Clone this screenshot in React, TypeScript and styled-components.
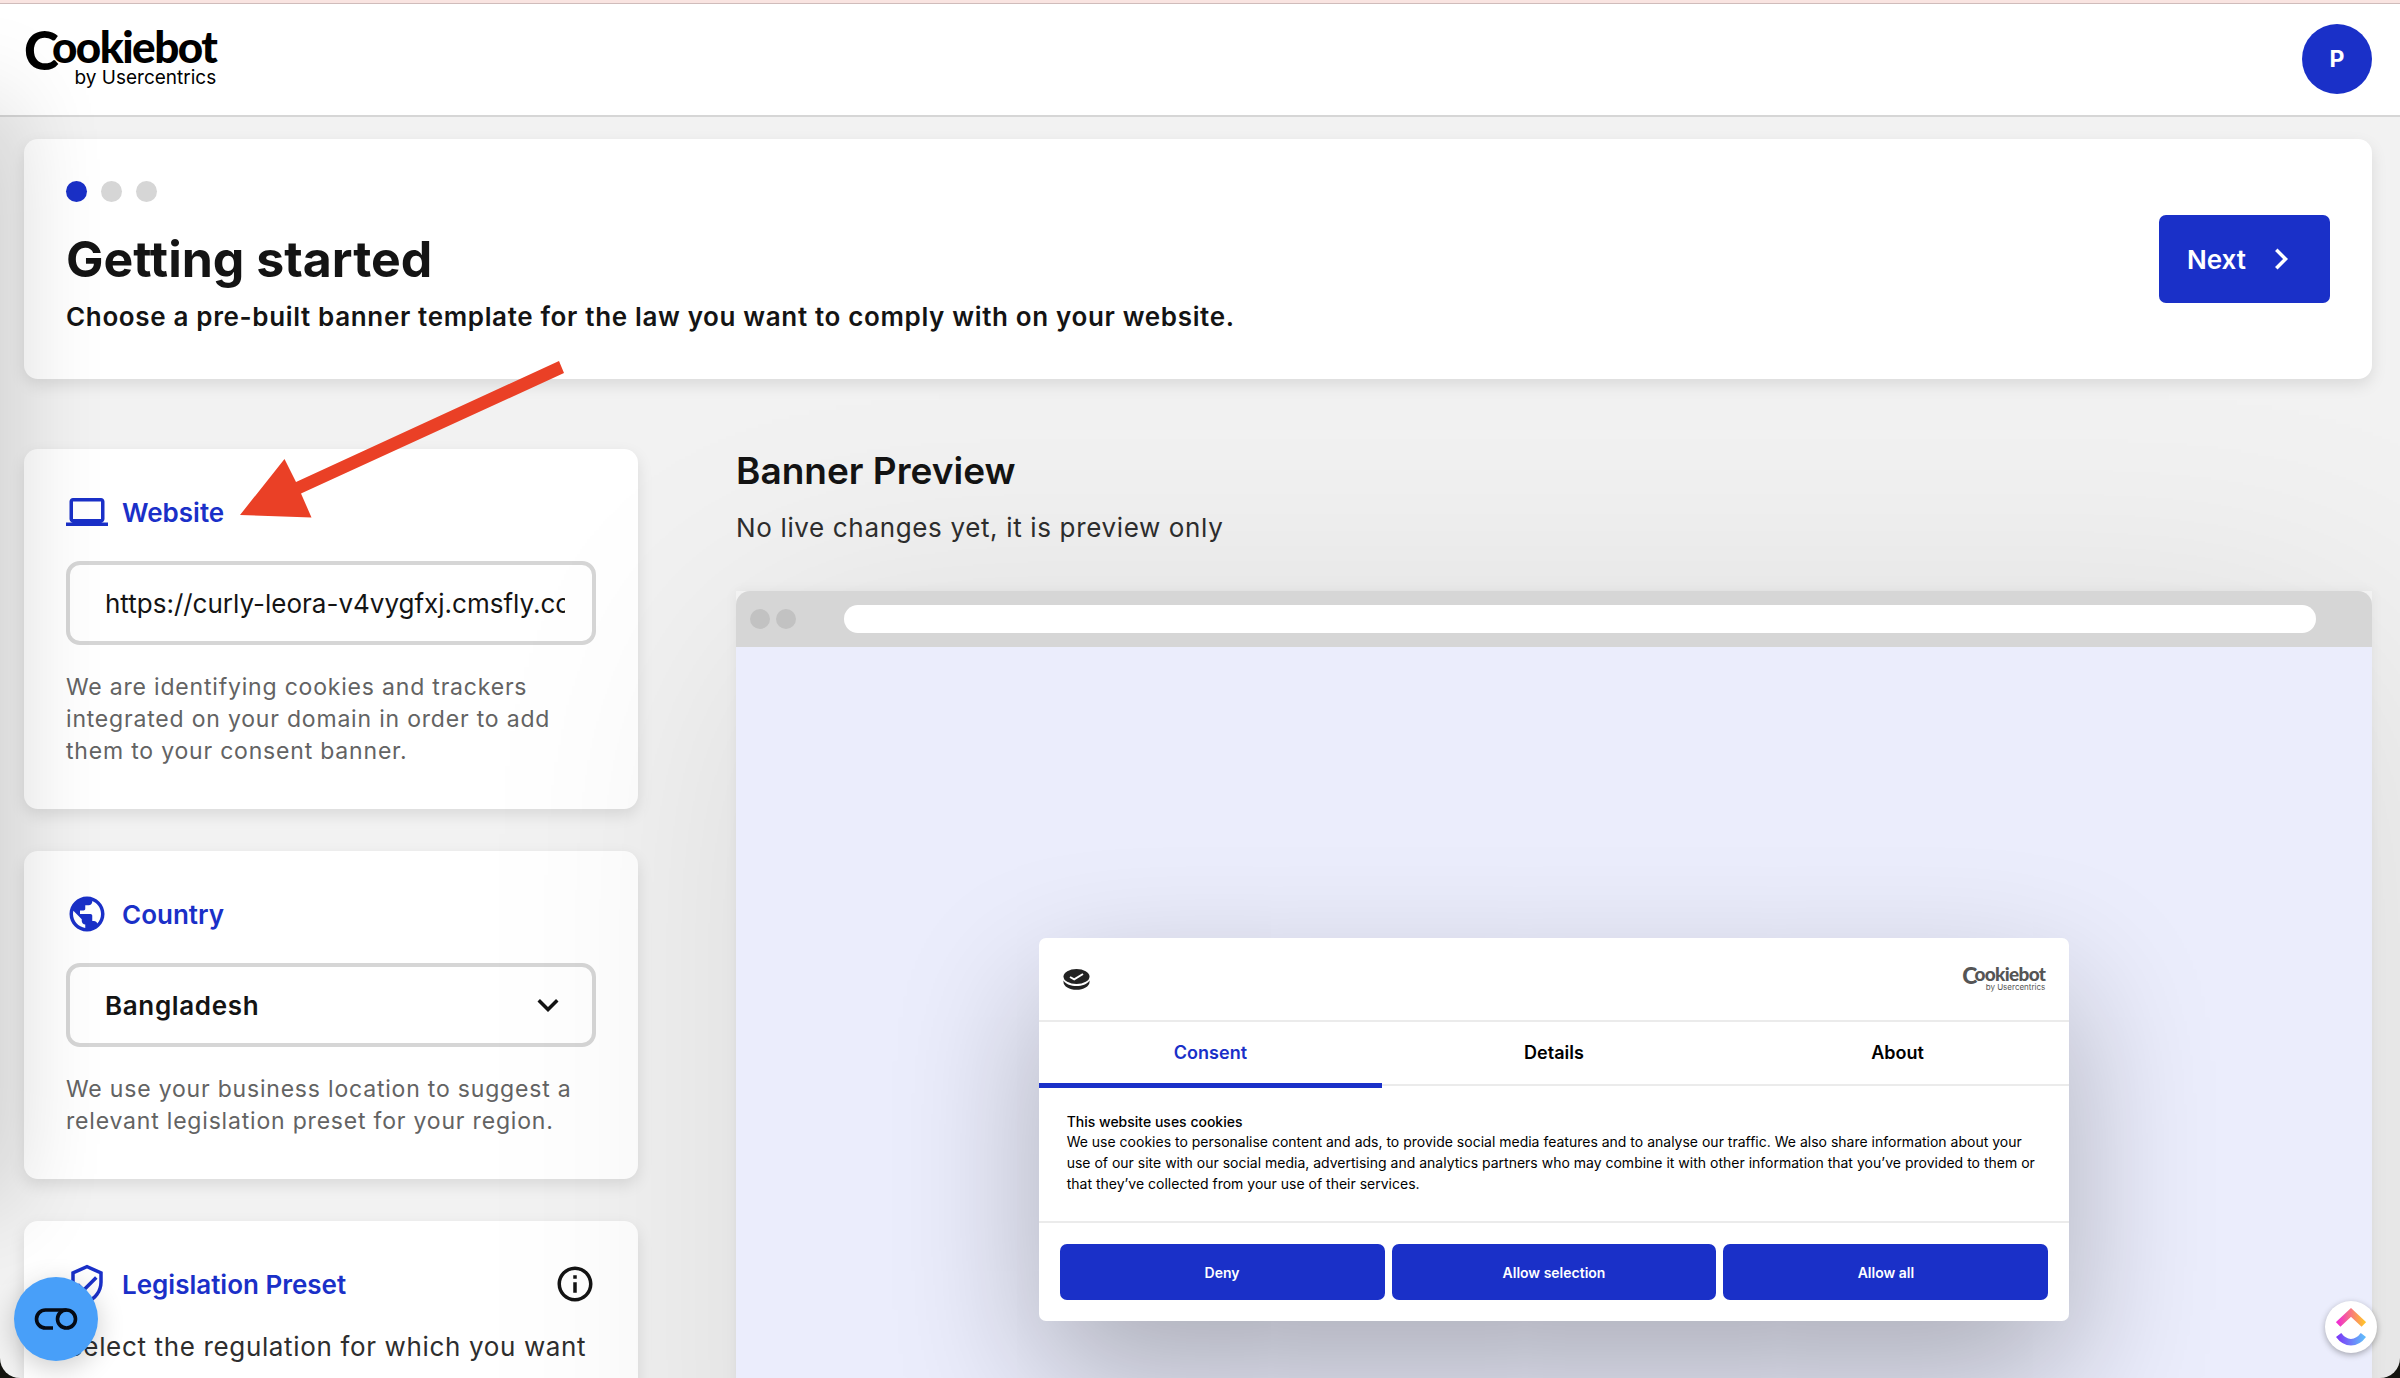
import React, { useState } from "react";
import styled, { createGlobalStyle, css } from "styled-components";
import {
  MdLaptop,
  MdPublic,
  MdOutlineVerifiedUser,
  MdInfoOutline,
  MdChevronRight,
  MdExpandMore,
} from "react-icons/md";

const blue = "#1a30c8";
const ink = "#141414";
const line = "#d6d6d6";
const tracking = "0.025em";

const GlobalStyle = createGlobalStyle`
  *, *::before, *::after { box-sizing: border-box; }
  body {
    margin: 0;
    background: #14140f;
    color: ${ink};
    font-family: Inter, "Liberation Sans", sans-serif;
    font-size: 26px;
  }
  h1, h2, h3, p { margin: 0; }
  button, input, select { font: inherit; letter-spacing: inherit; }
  button { cursor: pointer; }
`;

const Shell = styled.div`
  position: relative;
  display: flex;
  flex-direction: column;
  height: 100vh;
  overflow: hidden;
  background: #f2f2f2;
  border-top: 3px solid #f9e4e1;
  border-radius: 0 0 20px 20px;
`;

const EdgeShadow = styled.div`
  position: absolute;
  left: -60px;
  top: 100px;
  bottom: 178px;
  width: 60px;
  box-shadow: 0 0 100px rgba(0, 0, 0, 0.24);
  pointer-events: none;
`;

const Header = styled.header`
  display: flex;
  flex: none;
  align-items: center;
  justify-content: space-between;
  padding: 20px 28px 21px 24px;
  background: #fff;
  border-top: 1px solid #d0bcbb;
  border-bottom: 2px solid ${line};
`;

const LogoBox = styled.div<{ $small?: boolean }>`
  display: flex;
  flex-direction: column;
  align-items: flex-end;
  color: ${(p) => (p.$small ? "#555" : "#000")};
`;

const LogoName = styled.span<{ $small?: boolean }>`
  font-family: Lato, Inter, sans-serif;
  font-weight: 900;
  font-size: ${(p) => (p.$small ? "19px" : "44px")};
  line-height: ${(p) => (p.$small ? "16px" : "38px")};
  letter-spacing: -0.035em;
`;

const LogoInitial = styled.span`
  margin-right: -0.1em;
  font-size: 1.2em;
  line-height: 0;
  vertical-align: -0.13em;
`;

const LogoBy = styled.span<{ $small?: boolean }>`
  font-weight: 400;
  font-size: ${(p) => (p.$small ? "8px" : "19px")};
  line-height: ${(p) => (p.$small ? "10px" : "26px")};
`;

function Logo({ small }: { small?: boolean }) {
  return (
    <LogoBox $small={small}>
      <LogoName $small={small}>
        <LogoInitial>C</LogoInitial>ookiebot
      </LogoName>
      <LogoBy $small={small}>by Usercentrics</LogoBy>
    </LogoBox>
  );
}

const Avatar = styled.button`
  width: 70px;
  height: 70px;
  padding: 0;
  border: 0;
  border-radius: 50%;
  background: ${blue};
  color: #fff;
  font-size: 23px;
  font-weight: 700;
`;

const Main = styled.main`
  display: flex;
  flex: 1;
  flex-direction: column;
  gap: 70px;
  min-height: 0;
  padding: 22px 28px 0 24px;
`;

const panel = css`
  background: #fff;
  border-radius: 14px;
  box-shadow: 0 6px 16px rgba(0, 0, 0, 0.1);
`;

const Intro = styled.section`
  ${panel}
  display: flex;
  flex: none;
  align-items: center;
  justify-content: space-between;
  padding: 42px;
`;

const Steps = styled.div`
  display: flex;
  gap: 14px;
  margin-bottom: 27px;
`;

const Step = styled.span<{ $active?: boolean }>`
  width: 21px;
  height: 21px;
  border-radius: 50%;
  background: ${(p) => (p.$active ? blue : line)};
`;

const Title = styled.h1`
  margin-bottom: 8px;
  font-size: 50px;
  line-height: 60px;
  font-weight: 700;
`;

const Lead = styled.p`
  line-height: 40px;
  font-weight: 600;
  letter-spacing: ${tracking};
`;

const NextButton = styled.button`
  display: flex;
  align-items: center;
  gap: 14px;
  height: 88px;
  padding: 0 28px;
  border: 0;
  border-radius: 7px;
  background: ${blue};
  color: #fff;
  font-weight: 600;
`;

const Columns = styled.div`
  display: flex;
  flex: 1;
  gap: 98px;
  min-height: 0;
`;

const Side = styled.div`
  display: flex;
  flex: 0 0 614px;
  flex-direction: column;
  gap: 42px;
`;

const Card = styled.section<{ $fill?: boolean }>`
  ${panel}
  flex: ${(p) => (p.$fill ? "1 0 320px" : "none")};
  padding: 42px;
`;

const CardHead = styled.div<{ $tight?: boolean }>`
  display: flex;
  align-items: center;
  gap: 14px;
  height: 42px;
  margin-bottom: ${(p) => (p.$tight ? "21px" : "28px")};
  color: ${blue};
  font-weight: 600;
`;

const CardLabel = styled.label`
  font-weight: 600;
`;

const CardTitle = styled.h2`
  font-size: 26px;
  font-weight: 600;
`;

const InfoButton = styled.button`
  display: flex;
  margin-left: auto;
  padding: 0;
  border: 0;
  background: none;
  color: ${ink};
`;

const field = css`
  display: block;
  width: 100%;
  height: 84px;
  padding: 0 27px 0 35px;
  border: 4px solid ${line};
  border-radius: 14px;
  background: #fff;
  color: ${ink};
  outline: none;
`;

const TextField = styled.input`
  ${field}
`;

const SelectWrap = styled.div`
  display: grid;
  align-items: center;
  > * { grid-area: 1 / 1; }
  > svg {
    justify-self: end;
    margin-right: 27px;
    pointer-events: none;
  }
`;

const Select = styled.select`
  ${field}
  appearance: none;
  font-weight: 600;
  letter-spacing: ${tracking};
`;

const Hint = styled.p`
  margin-top: 26px;
  color: #636363;
  font-size: 23px;
  line-height: 32px;
  letter-spacing: 0.035em;
`;

const Text = styled.p`
  color: #2e2e2e;
  line-height: 42px;
  letter-spacing: ${tracking};
`;

const Preview = styled.section`
  display: flex;
  flex: 1;
  flex-direction: column;
  min-width: 0;
`;

const PreviewTitle = styled.h2`
  margin-bottom: 14px;
  font-size: 37px;
  line-height: 44px;
  font-weight: 600;
`;

const Frame = styled.div`
  flex: 1 0 auto;
  margin-top: 42px;
  box-shadow: 0 0 12px rgba(0, 0, 0, 0.05), 0 40px 260px rgba(0, 0, 0, 0.1);
`;

const FrameBar = styled.div`
  display: flex;
  align-items: center;
  gap: 6px;
  height: 56px;
  padding: 0 56px 0 14px;
  background: ${line};
  border-radius: 14px 14px 0 0;
`;

const FrameDot = styled.span`
  width: 20px;
  height: 20px;
  border-radius: 50%;
  background: #c2c2c2;
`;

const AddressBar = styled.div`
  flex: 1;
  height: 28px;
  margin-left: 42px;
  border-radius: 14px;
  background: #fff;
`;

const FrameBody = styled.div`
  display: flex;
  justify-content: center;
  padding: 291px 0;
  background: #ebedfc;
  overflow: hidden;
`;

const Dialog = styled.div`
  width: 63%;
  background: #fff;
  border-radius: 7px;
  box-shadow: 0 56px 140px rgba(0, 0, 0, 0.28);
  color: ${ink};
`;

const DialogHead = styled.div`
  display: flex;
  align-items: center;
  justify-content: space-between;
  height: 84px;
  padding: 0 24px;
  border-bottom: 2px solid #ebebeb;
`;

const Tabs = styled.div`
  display: grid;
  grid-template-columns: repeat(3, 1fr);
  height: 64px;
  border-bottom: 2px solid #ebebeb;
`;

const Tab = styled.button<{ $active?: boolean }>`
  height: 66px;
  padding: 0 0 6px;
  border: 0;
  background: ${(p) =>
    p.$active ? `linear-gradient(${blue}, ${blue}) bottom / 100% 5px no-repeat` : "none"};
  color: ${(p) => (p.$active ? blue : "#000")};
  font-size: 18px;
  font-weight: 600;
`;

const DialogText = styled.div`
  padding: 26px 28px 27px;
  font-size: 14px;
  line-height: 21px;
  color: #000;
`;

const DialogTitle = styled.h3`
  font-size: 14px;
  line-height: 19px;
  font-weight: 500;
`;

const Actions = styled.div`
  display: grid;
  grid-template-columns: repeat(3, 1fr);
  gap: 7px;
  padding: 21px;
  border-top: 2px solid #ebebeb;
`;

const Action = styled.button`
  height: 56px;
  border: 0;
  border-radius: 7px;
  background: ${blue};
  color: #fff;
  font-size: 14px;
  font-weight: 600;
`;

const Bubble = styled.button<{ $corner: "left" | "right" }>`
  position: absolute;
  display: flex;
  align-items: center;
  justify-content: center;
  padding: 0;
  border: 0;
  border-radius: 50%;
  ${(p) =>
    p.$corner === "left"
      ? css`
          left: 14px;
          bottom: 17px;
          width: 84px;
          height: 84px;
          background: #489ff9;
          box-shadow: 0 7px 28px rgba(0, 0, 0, 0.2);
        `
      : css`
          right: 23px;
          bottom: 25px;
          width: 52px;
          height: 52px;
          background: #fff;
          box-shadow: 0 2px 6px rgba(0, 0, 0, 0.3);
        `}
`;

const Pointer = styled.svg`
  position: absolute;
  left: 240px;
  top: 358px;
  pointer-events: none;
`;

const tabs = ["Consent", "Details", "About"];
const actions = ["Deny", "Allow selection", "Allow all"];

export default function App() {
  const [url, setUrl] = useState("https://curly-leora-v4vygfxj.cmsfly.com");
  const [tab, setTab] = useState("Consent");

  return (
    <>
      <GlobalStyle />
      <Shell>
        <Header>
          <Logo />
          <Avatar aria-label="Account P">P</Avatar>
        </Header>

        <Main>
          <Intro>
            <div>
              <Steps>
                <Step $active />
                <Step />
                <Step />
              </Steps>
              <Title>Getting started</Title>
              <Lead>
                Choose a pre-built banner template for the law you want to comply with on your
                website.
              </Lead>
            </div>
            <NextButton>
              Next
              <MdChevronRight size={42} />
            </NextButton>
          </Intro>

          <Columns>
            <Side>
              <Card>
                <CardHead>
                  <MdLaptop size={42} />
                  <CardLabel htmlFor="website">Website</CardLabel>
                </CardHead>
                <TextField id="website" value={url} onChange={(e) => setUrl(e.target.value)} />
                <Hint>
                  We are identifying cookies and trackers integrated on your domain in order to add
                  them to your consent banner.
                </Hint>
              </Card>

              <Card>
                <CardHead>
                  <MdPublic size={42} />
                  <CardLabel htmlFor="country">Country</CardLabel>
                </CardHead>
                <SelectWrap>
                  <Select id="country" defaultValue="Bangladesh">
                    <option>Bangladesh</option>
                  </Select>
                  <MdExpandMore size={42} />
                </SelectWrap>
                <Hint>
                  We use your business location to suggest a relevant legislation preset for your
                  region.
                </Hint>
              </Card>

              <Card $fill>
                <CardHead $tight>
                  <MdOutlineVerifiedUser size={42} />
                  <CardTitle>Legislation Preset</CardTitle>
                  <InfoButton aria-label="About legislation presets">
                    <MdInfoOutline size={42} />
                  </InfoButton>
                </CardHead>
                <Text>Select the regulation for which you want</Text>
              </Card>
            </Side>

            <Preview>
              <PreviewTitle>Banner Preview</PreviewTitle>
              <Text>No live changes yet, it is preview only</Text>
              <Frame>
                <FrameBar>
                  <FrameDot />
                  <FrameDot />
                  <AddressBar />
                </FrameBar>
                <FrameBody>
                  <Dialog>
                    <DialogHead>
                      <svg width="27" height="21" viewBox="0 0 27 21" aria-hidden="true">
                        <ellipse cx="13.500" cy="7.500" rx="13" ry="7.500" fill="#222" />
                        <path
                          d="M0.500 11.500C3 15.500 8 17 13.500 17S24 15.500 26.500 11.500V13C26.500 17.500 20.500 20.800 13.500 20.800S0.500 17.500 0.500 13Z"
                          fill="#222"
                        />
                        <path
                          d="M7 8l4.200 2.400L20 5"
                          fill="none"
                          stroke="#fff"
                          strokeWidth="2"
                        />
                      </svg>
                      <Logo small />
                    </DialogHead>
                    <Tabs role="tablist">
                      {tabs.map((name) => (
                        <Tab
                          key={name}
                          role="tab"
                          aria-selected={tab === name}
                          $active={tab === name}
                          onClick={() => setTab(name)}
                        >
                          {name}
                        </Tab>
                      ))}
                    </Tabs>
                    <DialogText>
                      <DialogTitle>This website uses cookies</DialogTitle>
                      <p>
                        We use cookies to personalise content and ads, to provide social media
                        features and to analyse our traffic. We also share information about your
                        use of our site with our social media, advertising and analytics partners
                        who may combine it with other information that you’ve provided to them or
                        that they’ve collected from your use of their services.
                      </p>
                    </DialogText>
                    <Actions>
                      {actions.map((name) => (
                        <Action key={name}>{name}</Action>
                      ))}
                    </Actions>
                  </Dialog>
                </FrameBody>
              </Frame>
            </Preview>
          </Columns>
        </Main>

        <EdgeShadow />

        <Pointer width="328" height="162" viewBox="240 361 328 162" aria-hidden="true">
          <path
            d="M559 361L564 373L301 493.500L311.500 517.500L240 515L284.500 459L296 482Z"
            fill="#ea4026"
          />
        </Pointer>

        <Bubble $corner="left" aria-label="Cookie settings">
          <svg
            width="44"
            height="24"
            viewBox="0 0 44 24"
            fill="none"
            stroke="#050a14"
            strokeWidth="3.600"
          >
            <path d="M19 21H11.500A9 9 0 0 1 11.500 3H32.500" />
            <circle cx="32.500" cy="12" r="9" />
          </svg>
        </Bubble>

        <Bubble $corner="right" aria-label="ClickUp">
          <svg width="30" height="38" viewBox="0 0 30 38" fill="none" strokeWidth="6.500">
            <defs>
              <linearGradient id="warm" x1="0" x2="1">
                <stop offset="0" stopColor="#f02fd0" />
                <stop offset="1" stopColor="#ffc02e" />
              </linearGradient>
              <linearGradient id="cool" x1="0" x2="1">
                <stop offset="0" stopColor="#7b3ff7" />
                <stop offset="1" stopColor="#62b8fb" />
              </linearGradient>
            </defs>
            <path d="M2.200 16.500L15 4.500L27.800 16.500" stroke="url(#warm)" />
            <path d="M2.600 27C9.500 36.500 20.500 36.500 27.400 27" stroke="url(#cool)" />
          </svg>
        </Bubble>
      </Shell>
    </>
  );
}
